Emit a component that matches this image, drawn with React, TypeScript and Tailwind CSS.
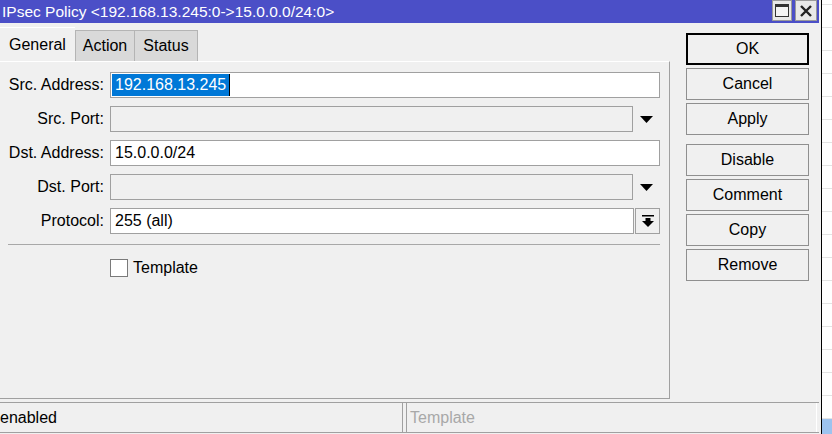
import React from 'react';

const font = { fontFamily: '"Liberation Sans", Arial, sans-serif' };

function DownArrow() {
  return (
    <svg width="13" height="7" viewBox="0 0 13 7">
      <polygon points="0,0 13,0 6.5,7" fill="#000" />
    </svg>
  );
}

function BarArrow() {
  return (
    <svg width="12" height="12" viewBox="0 0 12 12">
      <rect x="0" y="0" width="12" height="1.5" fill="#000" />
      <rect x="3.5" y="3" width="5" height="3" fill="#000" />
      <polygon points="0,6 12,6 6,12" fill="#000" />
    </svg>
  );
}

function Row({ label, children }: { label: string; children: React.ReactNode }) {
  return (
    <div className="flex items-center h-[26px]">
      <div className="w-[104px] text-right text-[16px] text-black whitespace-nowrap">{label}</div>
      <div className="ml-[6px] flex-1 flex h-full">{children}</div>
    </div>
  );
}

function Button({ label, primary }: { label: string; primary?: boolean }) {
  return (
    <div
      className={
        'h-[32px] w-[123px] flex items-center justify-center text-[16px] text-black bg-[#f0f0f0] ' +
        (primary ? 'border-2 border-black' : 'border border-[#8f8f8f]')
      }
    >
      {label}
    </div>
  );
}

export default function App() {
  return (
    <div className="w-[832px] h-[434px] flex overflow-hidden bg-white" style={font}>
      {/* dialog window */}
      <div className="w-[822px] h-full flex flex-col bg-[#f0f0f0] pr-[2px] border-r border-black">
        <div className="h-[23px] bg-[#4b4fc7] flex items-start justify-between">
          <div className="pl-[2px] pt-[2px] text-[15.5px] text-white leading-[19px] whitespace-nowrap">
            IPsec Policy &lt;192.168.13.245:0-&gt;15.0.0.0/24:0&gt;
          </div>
          <div className="flex gap-[3px] pr-[2px]">
            <div className="w-[20px] h-[21px] bg-[#e8e8e8] border border-[#9a9a9a] flex items-center justify-center">
              <div className="w-[14px] h-[13px] border border-[#333] border-t-[3px] bg-[#f4f4f4]" />
            </div>
            <div className="w-[22px] h-[21px] bg-[#e8e8e8] border border-[#9a9a9a] flex items-center justify-center">
              <svg width="12" height="12" viewBox="0 0 12 12">
                <path d="M1 1 L11 11 M11 1 L1 11" stroke="#222" strokeWidth="2.4" />
              </svg>
            </div>
          </div>
        </div>

        <div className="h-[379px] flex">
          <div className="w-[670px] flex flex-col pt-[4px]">
            <div className="h-[34px] flex items-end">
              <div className="h-[34px] w-[75px] bg-[#f0f0f0] border-t border-white flex items-center pl-[9px] text-[16px] text-black">
                General
              </div>
              <div className="h-[31px] w-[60px] bg-[#d9d9d9] border border-b-0 border-[#b4b4b4] flex items-center justify-center text-[16px] text-black">
                Action
              </div>
              <div className="h-[31px] w-[63px] bg-[#d9d9d9] border border-b-0 border-l-0 border-[#b4b4b4] flex items-center justify-center text-[16px] text-black">
                Status
              </div>
            </div>
            <div className="h-[338px] border-t border-t-white border-r border-b border-[#a0a0a0] pt-[10px] pr-[9px] flex flex-col gap-[8px]">
              <Row label="Src. Address:">
                <div className="flex-1 bg-white border border-[#a0a0a0] flex items-center pl-[1px] text-[16px]">
                  <span className="bg-[#0078d7] text-white h-[22px] leading-[22px] px-[3px] border-r border-black">192.168.13.245</span>
                </div>
              </Row>
              <Row label="Src. Port:">
                <div className="flex-1 bg-[#f0f0f0] border border-[#a0a0a0]" />
                <div className="w-[27px] flex items-center justify-center"><DownArrow /></div>
              </Row>
              <Row label="Dst. Address:">
                <div className="flex-1 bg-white border border-[#a0a0a0] flex items-center pl-[4px] text-[16px] text-black">15.0.0.0/24</div>
              </Row>
              <Row label="Dst. Port:">
                <div className="flex-1 bg-[#f0f0f0] border border-[#a0a0a0]" />
                <div className="w-[27px] flex items-center justify-center"><DownArrow /></div>
              </Row>
              <Row label="Protocol:">
                <div className="flex-1 bg-white border border-[#a0a0a0] flex items-center pl-[4px] text-[16px] text-black">255 (all)</div>
                <div className="ml-[1px] w-[25px] border border-[#a0a0a0] flex items-center justify-center"><BarArrow /></div>
              </Row>
              <div className="ml-[8px] mt-[2px] h-[1px] bg-[#a8a8a8]" />
              <div className="flex items-center ml-[110px] mt-[3px]">
                <div className="w-[18px] h-[18px] bg-white border border-[#7a7a7a]" />
                <div className="ml-[5px] text-[16px] text-black">Template</div>
              </div>
            </div>
          </div>

          <div className="pl-[16px] pt-[10px] flex flex-col">
            <div className="flex flex-col gap-[3px]">
              <Button label="OK" primary />
              <Button label="Cancel" />
              <Button label="Apply" />
            </div>
            <div className="flex flex-col gap-[3px] mt-[9px]">
              <Button label="Disable" />
              <Button label="Comment" />
              <Button label="Copy" />
              <Button label="Remove" />
            </div>
          </div>
        </div>

        <div className="h-[31px] flex border-t border-[#a0a0a0] border-b border-b-[#a0a0a0]">
          <div className="w-[403px] flex items-center text-[16px] text-black border-r border-[#a0a0a0]">enabled</div>
          <div className="w-[3px]" />
          <div className="w-[411px] flex items-center pl-[3px] text-[16px] text-[#a8a8a8] border-l border-[#a0a0a0] border-r border-r-white">Template</div>
        </div>
      </div>

      {/* window behind */}
      <div className="flex-1 flex flex-col">
        <div className="h-[5px] border-b border-[#e3e3e3] shrink-0" />
        {Array.from({ length: 18 }).map((_, i) => (
          <div key={i} className="h-[23px] border-b border-[#e3e3e3] shrink-0" />
        ))}
        <div className="flex-1 bg-[#9dc3ef]" />
      </div>
    </div>
  );
}
